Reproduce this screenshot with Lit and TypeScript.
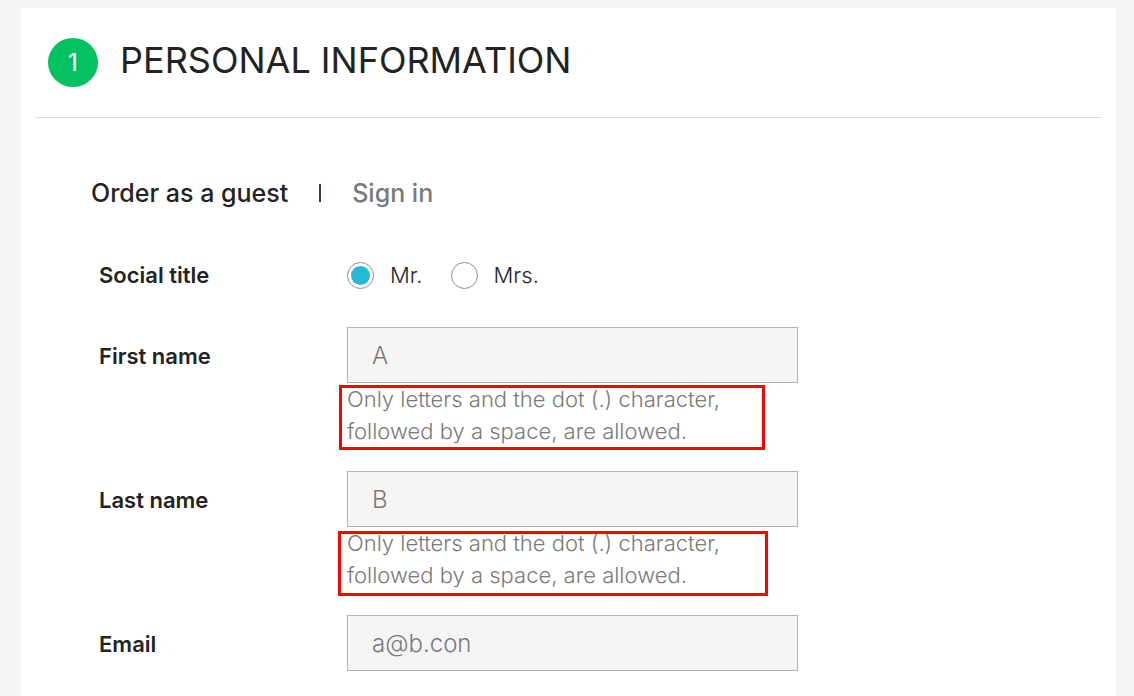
import { LitElement, html, css, nothing } from "lit";
import { customElement, property, state } from "lit/decorators.js";
import { classMap } from "lit/directives/class-map.js";

@customElement("form-field")
class FormField extends LitElement {
  @property() label = "";
  @property() value = "";
  @property() type = "text";
  @property() hint = "";
  @property({ type: Boolean }) wide = false;

  static styles = css`
    :host {
      display: block;
    }
    .row {
      display: grid;
      grid-template-columns: 248fr 451fr 240fr;
      align-items: start;
    }
    .label {
      font-size: 22px;
      line-height: 58px;
      font-weight: 600;
      color: #232323;
    }
    .input {
      display: block;
      box-sizing: border-box;
      width: 100%;
      height: 56px;
      padding: 0 24px;
      border: 1px solid #b5b5b5;
      border-radius: 0;
      background: #f5f5f5;
      color: #7a7a7a;
      font: 300 24px/32px Inter, "Open Sans", sans-serif;
      outline: none;
    }
    .input:focus {
      border-color: #24b9d7;
    }
    .hint {
      position: relative;
      margin: 0;
      font-size: 22px;
      line-height: 32px;
      font-weight: 300;
      color: #7a7a7a;
    }
    .text {
      display: block;
      max-width: 400px;
    }
    .mark {
      position: absolute;
      box-sizing: border-box;
      top: 2px;
      left: -8px;
      width: 426px;
      height: 65px;
      border: 3px solid #fe0000;
      pointer-events: none;
    }
    .mark.wide {
      top: 4px;
      left: -9px;
      width: 430px;
    }
  `;

  render() {
    return html`
      <div class="row">
        <label class="label" for="control">${this.label}</label>
        <div>
          <input class="input" id="control" type=${this.type} .value=${this.value} />
          ${this.hint
            ? html`<p class="hint">
                <span class="text">${this.hint}</span>
                <span class=${classMap({ mark: true, wide: this.wide })}></span>
              </p>`
            : nothing}
        </div>
      </div>
    `;
  }
}

@customElement("app-root")
class AppRoot extends LitElement {
  @state() private title_ = "Mr.";

  static styles = css`
    :host {
      display: block;
      box-sizing: border-box;
      min-height: 100vh;
      padding: 8px 18px 0 21px;
      background: #f5f5f5;
      color: #232323;
      font-family: Inter, "Open Sans", sans-serif;
    }
    .card {
      box-sizing: border-box;
      min-height: calc(100vh - 8px);
      padding: 0 15px 24px;
      background: #fff;
    }
    .head {
      display: flex;
      align-items: center;
      gap: 22px;
      padding: 22px 12px 27px;
      border-bottom: 1px solid #dcdcdc;
    }
    .step {
      display: grid;
      place-items: center;
      width: 50px;
      height: 49px;
      margin-top: 4px;
      border-radius: 50%;
      background: #03c160;
      color: #fff;
      font-size: 24px;
      font-weight: 400;
    }
    .heading {
      margin: 0;
      font-size: 36px;
      line-height: 60px;
      font-weight: 400;
    }
    .tabs {
      display: flex;
      align-items: center;
      gap: 31px;
      padding: 59px 55px 0;
      font-size: 25px;
      line-height: 32px;
      font-weight: 500;
    }
    .tab {
      color: #7a7a7a;
      text-decoration: none;
    }
    .tab.active {
      color: #232323;
    }
    .bar {
      width: 2px;
      height: 18px;
      background: #4a3434;
    }
    .form {
      display: grid;
      gap: 24px;
      padding: 38px 63px 0;
    }
    .titles {
      display: grid;
      grid-template-columns: 248fr 451fr 240fr;
      align-items: center;
    }
    .legend {
      font-size: 22px;
      line-height: 56px;
      font-weight: 600;
    }
    .options {
      display: flex;
      gap: 28px;
    }
    .option {
      display: flex;
      align-items: center;
      gap: 16px;
      font-size: 22px;
      line-height: 32px;
      font-weight: 300;
    }
    .radio {
      appearance: none;
      box-sizing: border-box;
      width: 27px;
      height: 27px;
      margin: 0;
      padding: 3px;
      border: 1px solid #8c8c8c;
      border-radius: 50%;
      background: #fff content-box;
    }
    .radio:checked::before {
      content: "";
      display: block;
      width: 19px;
      height: 19px;
      border-radius: 50%;
      background: #24b9d7;
    }
  `;

  render() {
    const hint = "Only letters and the dot (.) character, followed by a space, are allowed.";
    return html`
      <main class="card">
        <header class="head">
          <span class="step">1</span>
          <h1 class="heading">PERSONAL INFORMATION</h1>
        </header>
        <nav class="tabs">
          <a class="tab active" href="#guest">Order as a guest</a>
          <span class="bar"></span>
          <a class="tab" href="#signin">Sign in</a>
        </nav>
        <form class="form">
          <div class="titles" role="radiogroup" aria-labelledby="social">
            <span class="legend" id="social">Social title</span>
            <div class="options">
              ${["Mr.", "Mrs."].map(
                (name) => html`<label class="option">
                  <input
                    class="radio"
                    type="radio"
                    name="social-title"
                    .checked=${this.title_ === name}
                    @change=${() => (this.title_ = name)}
                  />
                  ${name}
                </label>`
              )}
            </div>
          </div>
          <form-field label="First name" value="A" hint=${hint}></form-field>
          <form-field label="Last name" value="B" hint=${hint} wide></form-field>
          <form-field label="Email" type="email" value="a@b.con"></form-field>
        </form>
      </main>
    `;
  }
}
